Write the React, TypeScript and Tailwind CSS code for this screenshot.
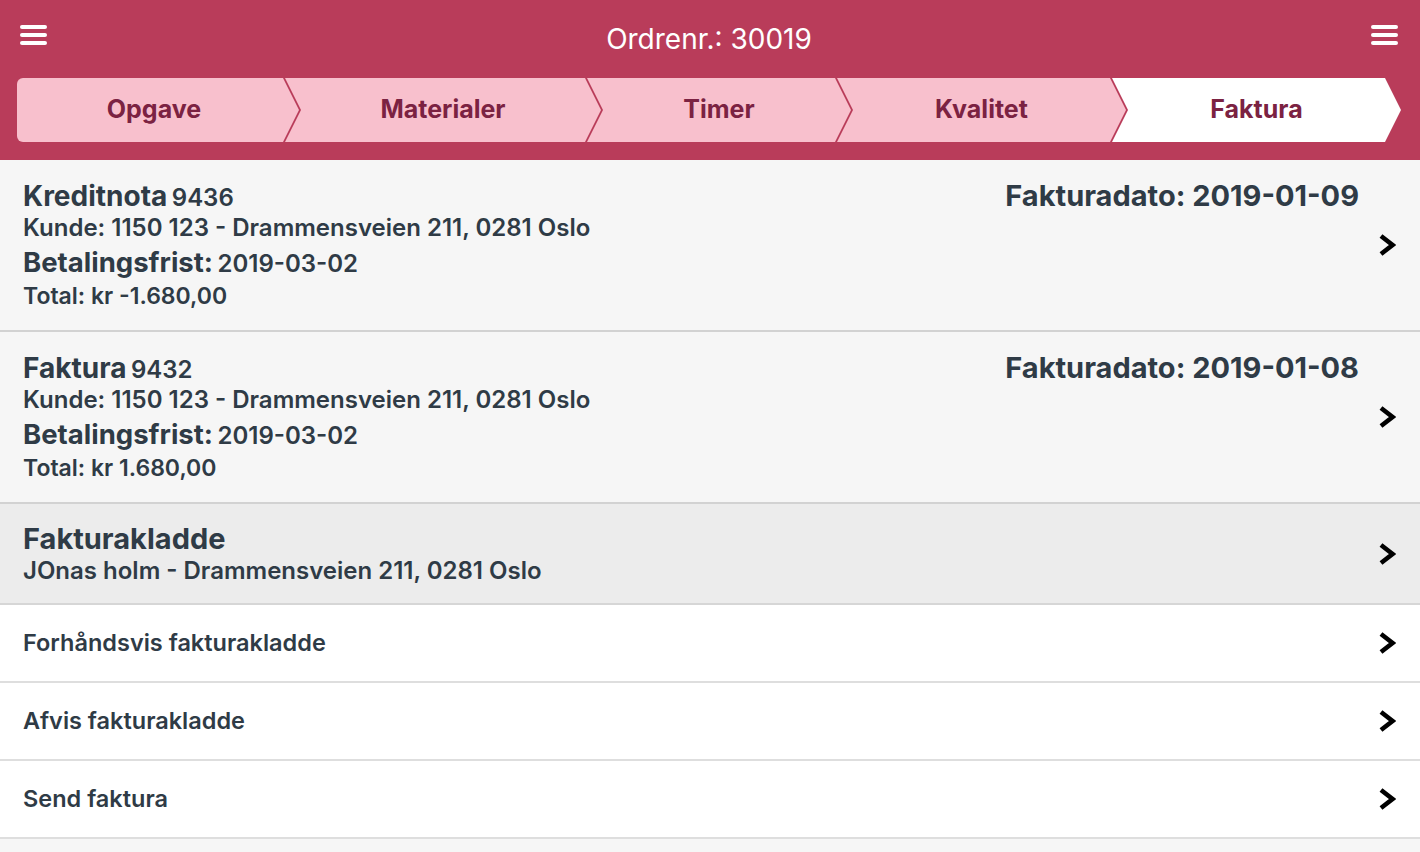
/** Ordre-skjerm: faktura-fanen med fakturaer, kladd og handlinger. */

const tabs = [
  { label: 'Opgave', w: 'w-[282px]', first: true },
  { label: 'Materialer', w: 'w-[316px]' },
  { label: 'Timer', w: 'w-[264px]' },
  { label: 'Kvalitet', w: 'w-[289px]' },
  { label: 'Faktura', w: 'w-[289px]', active: true },
]

const invoices = [
  {
    type: 'Kreditnota',
    nr: '9436',
    dato: '2019-01-09',
    total: 'kr -1.680,00',
  },
  {
    type: 'Faktura',
    nr: '9432',
    dato: '2019-01-08',
    total: 'kr 1.680,00',
  },
]

const actions = ['Forhåndsvis fakturakladde', 'Afvis fakturakladde', 'Send faktura']

function Hamburger() {
  return (
    <div className="flex flex-col gap-[4px] mt-[25px]">
      <div className="w-[27px] h-[4px] rounded-full bg-white" />
      <div className="w-[27px] h-[4px] rounded-full bg-white" />
      <div className="w-[27px] h-[4px] rounded-full bg-white" />
    </div>
  )
}

function Chevron() {
  return (
    <svg width="18" height="24" viewBox="0 0 18 24" className="shrink-0">
      <polyline
        points="3,3 14.5,12 3,21"
        fill="none"
        stroke="#000"
        strokeWidth="4.6"
        strokeLinejoin="miter"
      />
    </svg>
  )
}

export default function App() {
  return (
    <div className="min-h-[852px] bg-[#f6f6f6] font-['Inter','Liberation_Sans',sans-serif] text-[#2f3b46]">
      {/* Topplinje */}
      <header className="bg-[#b93c5a] pb-[18px]">
        <div className="flex items-start h-[78px] pl-[20px] pr-[22px]">
          <Hamburger />
          <h1 className="flex-1 text-center text-white text-[28px] font-normal leading-[34px] pt-[22px]">
            Ordrenr.: 30019
          </h1>
          <Hamburger />
        </div>

        {/* Faner */}
        <nav className="flex h-[64px] ml-[17px]">
          {tabs.map((t) => (
            <div
              key={t.label}
              className={[
                t.w,
                'h-full flex items-center justify-center text-[25px] font-bold text-[#7b2242]',
                t.active ? 'bg-white' : 'bg-[#f8c0cd]',
                t.first
                  ? 'rounded-l-[6px] pr-[8px] [clip-path:polygon(0_0,calc(100%_-_16px)_0,100%_50%,calc(100%_-_16px)_100%,0_100%)]'
                  : '-ml-[14px] [clip-path:polygon(0_0,calc(100%_-_16px)_0,100%_50%,calc(100%_-_16px)_100%,0_100%,16px_50%)]',
              ].join(' ')}
            >
              {t.label}
            </div>
          ))}
        </nav>
      </header>

      {/* Fakturaer */}
      {invoices.map((f) => (
        <div
          key={f.nr}
          className="flex items-center h-[172px] bg-[#f6f6f6] border-b-2 border-[#d2d2d2] pl-[23px] pr-[24px]"
        >
          <div className="flex-1 self-start pt-[20px]">
            <div className="h-[32px] leading-[32px] whitespace-nowrap">
              <span className="text-[28px] font-bold">{f.type}</span>{' '}
              <span className="text-[24px] font-semibold">{f.nr}</span>
            </div>
            <div className="h-[32px] text-[24px] font-semibold leading-[32px] whitespace-nowrap">
              Kunde: 1150 123 - Drammensveien 211, 0281 Oslo
            </div>
            <div className="h-[36px] leading-[36px] whitespace-nowrap">
              <span className="text-[27.5px] font-bold">Betalingsfrist:</span>{' '}
              <span className="text-[24px] font-semibold">2019-03-02</span>
            </div>
            <div className="h-[32px] text-[23px] font-semibold leading-[32px] whitespace-nowrap">
              Total: {f.total}
            </div>
          </div>
          <div className="self-start pt-[20px] text-[29px] font-bold leading-[32px]">
            Fakturadato: {f.dato}
          </div>
          <div className="ml-[19px]">
            <Chevron />
          </div>
        </div>
      ))}

      {/* Kladd */}
      <div className="flex items-center h-[101px] bg-[#ececec] border-b-2 border-[#d6d6d6] pl-[23px] pr-[24px]">
        <div className="flex-1">
          <div className="h-[34px] text-[29px] font-bold leading-[34px]">Fakturakladde</div>
          <div className="h-[30px] text-[24px] font-semibold leading-[30px]">
            JOnas holm - Drammensveien 211, 0281 Oslo
          </div>
        </div>
        <Chevron />
      </div>

      {/* Handlinger */}
      {actions.map((a) => (
        <div
          key={a}
          className="flex items-center h-[78px] bg-white border-b-2 border-[#dedede] pl-[23px] pr-[24px]"
        >
          <div className="flex-1 text-[23.5px] font-semibold">{a}</div>
          <Chevron />
        </div>
      ))}
    </div>
  )
}
